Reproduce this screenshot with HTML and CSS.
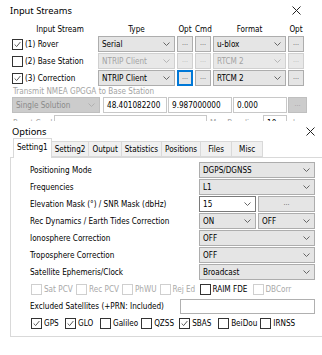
FILE: index.html
```html
<!DOCTYPE html>
<html>
<head>
<meta charset="utf-8">
<link rel="stylesheet" href="styles.css">
</head>
<body>
<div class="win win-input">
  <div class="titlebar tb-input">
    <span class="title">Input Streams</span>
    <svg class="close" width="9" height="9" viewBox="0 0 9 9"><path d="M0.5 0.5L8.5 8.5M8.5 0.5L0.5 8.5" stroke="#222" stroke-width="1" fill="none"/></svg>
  </div>
  <div class="streams">
    <div class="hdr hdr-label">Input Stream</div>
    <div class="hdr">Type</div>
    <div class="hdr">Opt</div>
    <div class="hdr">Cmd</div>
    <div class="hdr">Format</div>
    <div class="hdr">Opt</div>

    <label class="chk-item stream-label"><span class="cb checked"><svg viewBox="0 0 11 11"><path d="M2 5.5L4.5 8L9 2.5" stroke="#333" stroke-width="1" fill="none"/></svg></span><span>(1) Rover</span></label>
    <div class="sel"><span>Serial</span><svg class="chev" width="7" height="4" viewBox="0 0 7 4"><path d="M0.5 0.5L3.5 3.5L6.5 0.5" stroke="#666" fill="none"/></svg></div>
    <div class="btn">...</div>
    <div class="btn">...</div>
    <div class="sel"><span>u-blox</span><svg class="chev" width="7" height="4" viewBox="0 0 7 4"><path d="M0.5 0.5L3.5 3.5L6.5 0.5" stroke="#666" fill="none"/></svg></div>
    <div class="btn">...</div>

    <label class="chk-item stream-label"><span class="cb"></span><span>(2) Base Station</span></label>
    <div class="sel dis"><span>NTRIP Client</span><svg class="chev" width="7" height="4" viewBox="0 0 7 4"><path d="M0.5 0.5L3.5 3.5L6.5 0.5" stroke="#b5b5b5" fill="none"/></svg></div>
    <div class="btn dis">...</div>
    <div class="btn dis">...</div>
    <div class="sel dis"><span>RTCM 2</span><svg class="chev" width="7" height="4" viewBox="0 0 7 4"><path d="M0.5 0.5L3.5 3.5L6.5 0.5" stroke="#b5b5b5" fill="none"/></svg></div>
    <div class="btn dis">...</div>

    <label class="chk-item stream-label"><span class="cb checked"><svg viewBox="0 0 11 11"><path d="M2 5.5L4.5 8L9 2.5" stroke="#333" stroke-width="1" fill="none"/></svg></span><span>(3) Correction</span></label>
    <div class="sel"><span>NTRIP Client</span><svg class="chev" width="7" height="4" viewBox="0 0 7 4"><path d="M0.5 0.5L3.5 3.5L6.5 0.5" stroke="#666" fill="none"/></svg></div>
    <div class="btn focus">...</div>
    <div class="btn">...</div>
    <div class="sel"><span>RTCM 2</span><svg class="chev" width="7" height="4" viewBox="0 0 7 4"><path d="M0.5 0.5L3.5 3.5L6.5 0.5" stroke="#666" fill="none"/></svg></div>
    <div class="btn">...</div>
  </div>
  <div class="transmit">Transmit NMEA GPGGA to Base Station</div>
  <div class="base-row">
    <div class="sel dis2 w-sol"><span>Single Solution</span><svg class="chev" width="7" height="4" viewBox="0 0 7 4"><path d="M0.5 0.5L3.5 3.5L6.5 0.5" stroke="#b0b0b0" fill="none"/></svg></div>
    <div class="inp w-lat">48.401082200</div>
    <div class="inp w-lon">9.987000000</div>
    <div class="inp w-hgt">0.000</div>
    <div class="btn dis2 w-pos">...</div>
  </div>
  <div class="reset-row">
    <span class="gray w-reset">Reset Cmd</span>
    <div class="inp w-cmd"></div>
    <span class="gray w-maxb">Max Baseline</span>
    <div class="inp w-mb">10</div>
    <span class="gray">km</span>
  </div>
</div>

<div class="win win-options">
  <div class="titlebar tb-options">
    <span class="title">Options</span>
    <svg class="close" width="9" height="9" viewBox="0 0 9 9"><path d="M0.5 0.5L8.5 8.5M8.5 0.5L0.5 8.5" stroke="#222" stroke-width="1" fill="none"/></svg>
  </div>
  <div class="tabs">
    <div class="tab active">Setting1</div>
    <div class="tab">Setting2</div>
    <div class="tab">Output</div>
    <div class="tab">Statistics</div>
    <div class="tab">Positions</div>
    <div class="tab">Files</div>
    <div class="tab">Misc</div>
  </div>
  <div class="pane">
    <div class="row">
      <span class="lbl">Positioning Mode</span>
      <div class="sel w-ctl"><span>DGPS/DGNSS</span><svg class="chev" width="7" height="4" viewBox="0 0 7 4"><path d="M0.5 0.5L3.5 3.5L6.5 0.5" stroke="#666" fill="none"/></svg></div>
    </div>
    <div class="row">
      <span class="lbl">Frequencies</span>
      <div class="sel w-ctl"><span>L1</span><svg class="chev" width="7" height="4" viewBox="0 0 7 4"><path d="M0.5 0.5L3.5 3.5L6.5 0.5" stroke="#666" fill="none"/></svg></div>
    </div>
    <div class="row">
      <span class="lbl">Elevation Mask (°) / SNR Mask (dbHz)</span>
      <div class="pair">
        <div class="sel white w-half"><span>15</span><svg class="chev" width="7" height="4" viewBox="0 0 7 4"><path d="M0.5 0.5L3.5 3.5L6.5 0.5" stroke="#666" fill="none"/></svg></div>
        <div class="btn w-half">...</div>
      </div>
    </div>
    <div class="row">
      <span class="lbl">Rec Dynamics / Earth Tides Correction</span>
      <div class="pair">
        <div class="sel w-half"><span>ON</span><svg class="chev" width="7" height="4" viewBox="0 0 7 4"><path d="M0.5 0.5L3.5 3.5L6.5 0.5" stroke="#666" fill="none"/></svg></div>
        <div class="sel w-half"><span>OFF</span><svg class="chev" width="7" height="4" viewBox="0 0 7 4"><path d="M0.5 0.5L3.5 3.5L6.5 0.5" stroke="#666" fill="none"/></svg></div>
      </div>
    </div>
    <div class="row">
      <span class="lbl">Ionosphere Correction</span>
      <div class="sel w-ctl"><span>OFF</span><svg class="chev" width="7" height="4" viewBox="0 0 7 4"><path d="M0.5 0.5L3.5 3.5L6.5 0.5" stroke="#666" fill="none"/></svg></div>
    </div>
    <div class="row">
      <span class="lbl">Troposphere Correction</span>
      <div class="sel w-ctl"><span>OFF</span><svg class="chev" width="7" height="4" viewBox="0 0 7 4"><path d="M0.5 0.5L3.5 3.5L6.5 0.5" stroke="#666" fill="none"/></svg></div>
    </div>
    <div class="row">
      <span class="lbl">Satellite Ephemeris/Clock</span>
      <div class="sel w-ctl"><span>Broadcast</span><svg class="chev" width="7" height="4" viewBox="0 0 7 4"><path d="M0.5 0.5L3.5 3.5L6.5 0.5" stroke="#666" fill="none"/></svg></div>
    </div>
    <div class="row chk-row">
      <label class="chk-item dis w-satpcv"><span class="cb"></span><span>Sat PCV</span></label>
      <label class="chk-item dis w-recpcv"><span class="cb"></span><span>Rec PCV</span></label>
      <label class="chk-item dis w-phwu"><span class="cb"></span><span>PhWU</span></label>
      <label class="chk-item dis w-rejed"><span class="cb"></span><span>Rej Ed</span></label>
      <label class="chk-item w-raim"><span class="cb"></span><span>RAIM FDE</span></label>
      <label class="chk-item dis"><span class="cb"></span><span>DBCorr</span></label>
    </div>
    <div class="row">
      <span class="lbl lbl-excl">Excluded Satellites (+PRN: Included)</span>
      <div class="inp w-excl"></div>
    </div>
    <div class="row chk-row">
      <label class="chk-item w-gps"><span class="cb checked"><svg viewBox="0 0 11 11"><path d="M2 5.5L4.5 8L9 2.5" stroke="#333" stroke-width="1" fill="none"/></svg></span><span>GPS</span></label>
      <label class="chk-item w-glo"><span class="cb checked"><svg viewBox="0 0 11 11"><path d="M2 5.5L4.5 8L9 2.5" stroke="#333" stroke-width="1" fill="none"/></svg></span><span>GLO</span></label>
      <label class="chk-item w-gal"><span class="cb"></span><span>Galileo</span></label>
      <label class="chk-item w-qzss"><span class="cb"></span><span>QZSS</span></label>
      <label class="chk-item w-sbas"><span class="cb checked"><svg viewBox="0 0 11 11"><path d="M2 5.5L4.5 8L9 2.5" stroke="#333" stroke-width="1" fill="none"/></svg></span><span>SBAS</span></label>
      <label class="chk-item w-bds"><span class="cb"></span><span>BeiDou</span></label>
      <label class="chk-item"><span class="cb"></span><span>IRNSS</span></label>
    </div>
  </div>
</div>
</body>
</html>
```

FILE: styles.css
```css
* { box-sizing: border-box; }
html, body { margin: 0; padding: 0; }
body {
  width: 322px;
  height: 355px;
  overflow: hidden;
  position: relative;
  background: #fff;
  font-family: "DejaVu Sans", sans-serif;
  font-stretch: condensed;
  font-size: 8.1px;
  color: #000;
}
.win {
  position: absolute;
  left: 0;
  width: 322px;
  background: #fff;
  overflow: hidden;
}
.win-input { top: 0; height: 121px; }
.win-options { top: 121px; height: 234px; }

.titlebar {
  display: flex;
  align-items: center;
  justify-content: space-between;
}
.title {
  font-family: "Noto Sans", "Open Sans", sans-serif;
  font-size: 9.3px;
  color: #000;
}
.tb-input { height: 24px; padding: 0 21px 4px 10px; }
.tb-options { height: 17px; padding: 3px 7px 0 12px; }
.close { display: block; }

/* Input streams grid */
.streams {
  display: grid;
  grid-template-columns: 85px 77px 16px 16px 73px 16px;
  grid-template-rows: 11px 16px 16px 16px;
  column-gap: 2px;
  row-gap: 1px;
  padding-left: 11px;
}
.hdr {
  text-align: center;
  line-height: 11px;
  white-space: nowrap;
}
.hdr-label { padding-left: 13px; }

.chk-item {
  display: flex;
  align-items: center;
  gap: 2px;
  white-space: nowrap;
}
.chk-item.dis { color: #a8a8a8; }
.cb {
  width: 11px;
  height: 11px;
  border: 1px solid #333;
  background: #fff;
  flex: none;
  display: block;
}
.cb svg { display: block; width: 9px; height: 9px; }
.chk-item.dis .cb { border-color: #cfcfcf; }
.stream-label { padding-left: 1px; }

.sel {
  height: 16px;
  border: 1px solid #adadad;
  background: #e5e5e5;
  display: flex;
  align-items: center;
  justify-content: space-between;
  padding: 0 4px 0 3px;
  white-space: nowrap;
  overflow: hidden;
}
.sel.dis { background: #e8e8e8; border-color: #d0d0d0; color: #a3a3a3; }
.sel.dis2 { background: #cccccc; border-color: #bfbfbf; color: #8a8a8a; }
.sel.white { background: #fff; border-color: #7a7a7a; }
.chev { flex: none; display: block; }

.btn {
  height: 16px;
  border: 1px solid #adadad;
  background: #e5e5e5;
  color: #555;
  text-align: center;
  line-height: 12px;
  font-size: 7px;
}
.btn.dis { background: #e8e8e8; border-color: #d0d0d0; color: #b8b8b8; }
.btn.dis2 { background: #cccccc; border-color: #bfbfbf; color: #a0a0a0; }
.btn.focus { border: 2px solid #0078d7; line-height: 10px; }

.transmit {
  color: #a3a3a3;
  height: 10px;
  line-height: 10px;
  padding-left: 13px;
  white-space: nowrap;
}
.base-row {
  display: flex;
  gap: 1px;
  padding-left: 12px;
  margin-top: 1px;
  height: 16px;
}
.inp {
  height: 16px;
  border: 1px solid #c8c8c8;
  background: #fff;
  padding-left: 3px;
  line-height: 14px;
  white-space: nowrap;
}
.w-sol { width: 88px; margin-right: 2px; }
.w-lat { width: 64px; }
.w-lon { width: 64px; }
.w-hgt { width: 54px; }
.w-pos { width: 19px; }

.reset-row {
  display: flex;
  align-items: center;
  margin-top: 2px;
  padding-left: 13px;
  height: 16px;
}
.gray { color: #a3a3a3; white-space: nowrap; }
.w-reset { width: 41px; }
.w-cmd { width: 153px; margin-right: 3px; }
.w-maxb { width: 53px; }
.w-mb { width: 24px; margin-right: 6px; }

/* Options */
.tabs {
  display: flex;
  align-items: flex-end;
  height: 19px;
  margin-left: 13px;
  position: relative;
  z-index: 1;
}
.tab {
  height: 16px;
  line-height: 14px;
  padding: 0 3px;
  min-width: 31px;
  text-align: center;
  border: 1px solid #d9d9d9;
  border-left: none;
  background: #f0f0f0;
  white-space: nowrap;
}
.tab.active {
  height: 20px;
  margin-bottom: -1px;
  background: #fff;
  border-left: 1px solid #d9d9d9;
  border-bottom: none;
  line-height: 17px;
}
.pane {
  margin-left: 10px;
  width: 330px;
  height: 180px;
  border: 1px solid #d9d9d9;
  padding: 4px 0 0 19px;
}
.row {
  display: flex;
  align-items: center;
  height: 16px;
  margin-bottom: 1px;
}
.lbl { width: 169px; white-space: nowrap; }
.w-ctl { width: 116px; }
.pair { display: flex; gap: 2px; width: 116px; }
.w-half { width: 57px; }
.lbl-excl { width: 150px; }
.w-excl { width: 135px; height: 15px; border-color: #b0b0b0; }
.chk-row { padding-left: 1px; }
.chk-row .chk-item { margin-right: 3px; }
.w-satpcv { min-width: 42px; }
.w-recpcv { min-width: 42px; }
.w-phwu { min-width: 34px; }
.w-rejed { min-width: 37px; }
.w-raim { min-width: 50px; }
.w-gps { min-width: 31px; }
.w-glo { min-width: 32px; }
.w-gal { min-width: 37px; }
.w-qzss { min-width: 35px; }
.w-sbas { min-width: 36px; }
.w-bds { min-width: 36px; }
```
